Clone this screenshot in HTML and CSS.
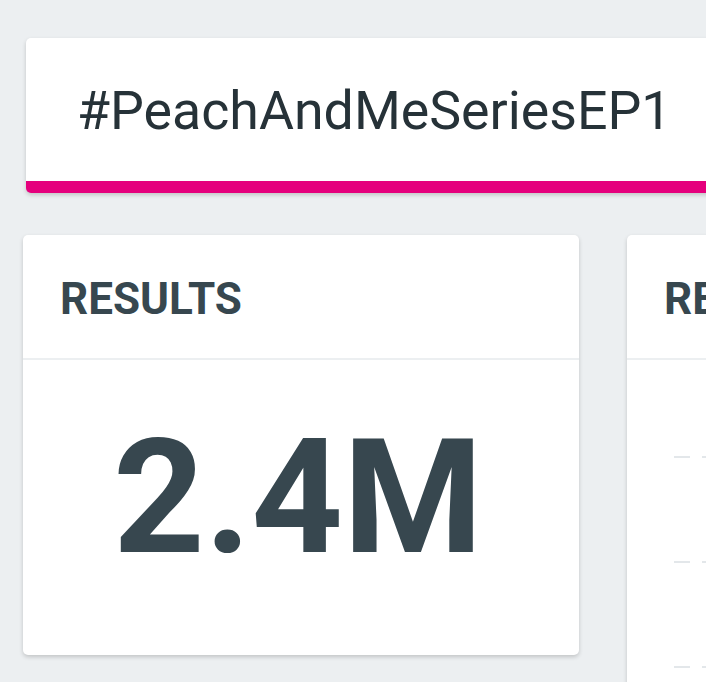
FILE: index.html
```html
<!DOCTYPE html>
<html lang="en">
  <head>
    <meta charset="UTF-8" />
    <meta name="viewport" content="width=device-width, initial-scale=1.0" />
    <title>Hashtag Tracker</title>
    <link rel="stylesheet" href="styles.css">
  </head>
  <body>
    <div class="page">
      <div class="tag-card">
        <h1 class="tag-name">#PeachAndMeSeriesEP1</h1>
      </div>

      <div class="stats">
        <div class="card">
          <div class="card-header">RESULTS</div>
          <div class="card-body">
            <span class="big-number">2.4M</span>
          </div>
        </div>

        <div class="card card-tall">
          <div class="card-header">REACH</div>
          <div class="card-body list">
            <!-- rows still loading -->
            <div class="row"><span class="dash"></span><span class="dash short"></span></div>
            <div class="row"><span class="dash"></span><span class="dash short"></span></div>
            <div class="row"><span class="dash"></span><span class="dash short"></span></div>
          </div>
        </div>
      </div>
    </div>
  </body>
</html>
```

FILE: styles.css
```css
html,
body {
  margin: 0;
  padding: 0;
  background-color: #eceff1;
  font-family: Roboto, "Liberation Sans", Arial, sans-serif;
  overflow: hidden;
}
.page {
  width: 1400px;
  padding-top: 38px;
}
.tag-card {
  margin-left: 26px;
  width: 1100px;
  height: 143px;
  background-color: #fff;
  border-bottom: 12px solid #e5007d;
  border-radius: 5px;
  box-shadow: 0 2px 4px rgba(0, 0, 0, 0.18);
  display: flex;
  align-items: center;
  padding-left: 51px;
  box-sizing: content-box;
}
.tag-name {
  margin: 0;
  font-size: 53.7px;
  font-weight: 400;
  color: #263238;
  line-height: 1;
  padding-top: 2px;
}
.stats {
  display: flex;
  align-items: flex-start;
  gap: 48px;
  margin-top: 42px;
  padding-left: 23px;
}
.card {
  width: 556px;
  height: 420px;
  flex-shrink: 0;
  background-color: #fff;
  border-radius: 5px;
  box-shadow: 0 2px 4px rgba(0, 0, 0, 0.18);
  display: flex;
  flex-direction: column;
  overflow: hidden;
}
.card-tall {
  height: 520px;
}
.card-header {
  flex-shrink: 0;
  height: 125px;
  box-sizing: border-box;
  padding: 4px 37px 0;
  display: flex;
  align-items: center;
  font-size: 44px;
  font-weight: 700;
  color: #37474f;
  border-bottom: 2px solid #eceff1;
  white-space: nowrap;
}
.card-body {
  flex: 1;
  display: flex;
  align-items: center;
  justify-content: center;
}
.big-number {
  font-size: 160px;
  font-weight: 700;
  color: #37474f;
  line-height: 1;
  margin-top: -20px;
  margin-left: -6px;
}
.list {
  flex-direction: column;
  align-items: flex-start;
  justify-content: flex-start;
  padding: 96px 0 0 47px;
  gap: 103px;
}
.row {
  display: flex;
  align-items: center;
  gap: 12px;
  height: 2px;
}
.dash {
  display: block;
  width: 16px;
  height: 2px;
  background-color: #e3e7ea;
}
.dash.short {
  width: 6px;
}
```
